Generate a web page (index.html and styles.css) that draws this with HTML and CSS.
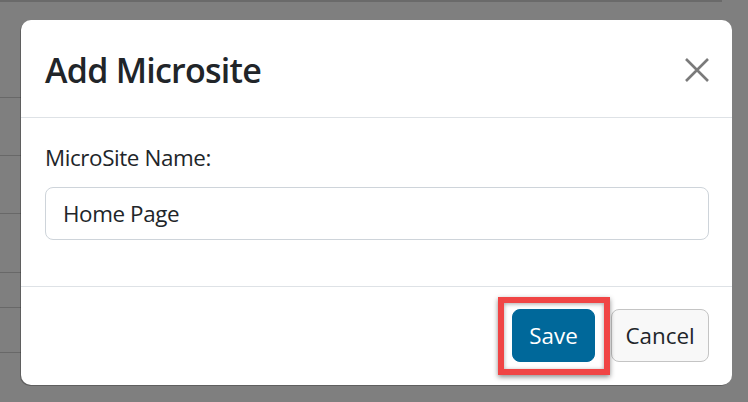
FILE: index.html
```html
<!DOCTYPE html>
<html lang="en">
<head>
<meta charset="utf-8">
<title>Add Microsite</title>
<link rel="stylesheet" href="styles.css">
</head>
<body>
<div class="page">
  <div class="row r1"></div>
  <div class="row r2"></div>
  <div class="row r3"></div>
  <div class="row r4"></div>
  <div class="row r5"></div>
  <div class="row r6"></div>
</div>
<div class="backdrop">
  <div class="modal">
    <div class="modal-header">
      <h4 class="modal-title">Add Microsite</h4>
      <button class="close" aria-label="Close">
        <svg width="24" height="24" viewBox="0 0 24 24"><path d="M1 1 L23 23 M23 1 L1 23" stroke="#7a7a7a" stroke-width="2.6" fill="none"/></svg>
      </button>
    </div>
    <div class="modal-body">
      <label class="label">MicroSite Name:</label>
      <div class="input">Home Page</div>
    </div>
    <div class="modal-footer">
      <button class="btn btn-save">Save</button>
      <button class="btn btn-cancel">Cancel</button>
    </div>
  </div>
</div>
</body>
</html>
```

FILE: styles.css
```css
html, body {
  margin: 0;
  padding: 0;
}
body {
  width: 748px;
  height: 402px;
  overflow: hidden;
  background: #7f7f7f;
  font-family: "Open Sans", "Noto Sans", sans-serif;
  position: relative;
}
.page {
  width: 722px;
  border-top: 2px solid #6a6a6a;
}
.row {
  border-bottom: 1px solid #686868;
}
.r1 { height: 95px; }
.r2 { height: 57px; }
.r3 { height: 57px; }
.r4 { height: 58px; }
.r5 { height: 34px; }
.r6 { height: 44px; }

.backdrop {
  position: absolute;
  inset: 0;
}
.modal {
  position: absolute;
  left: 21px;
  top: 20px;
  width: 711px;
  height: 365px;
  background: #fff;
  border-radius: 10px;
  box-shadow: -1px 1px 0 rgba(0,0,0,0.25);
  display: flex;
  flex-direction: column;
  color: #212529;
}
.modal-header {
  height: 94px;
  padding: 3px 23px 0 24px;
  border-bottom: 1px solid #dee2e6;
  display: flex;
  align-items: center;
  justify-content: space-between;
}
.modal-title {
  margin: 0;
  font-size: 34px;
  font-weight: 600;
  line-height: 1.2;
  letter-spacing: -0.75px;
}
.close {
  border: 0;
  background: none;
  padding: 0;
  width: 24px;
  height: 24px;
  display: flex;
}
.modal-body {
  height: 145px;
  padding: 23px 23px 0 24px;
  border-bottom: 1px solid #dee2e6;
  display: flex;
  flex-direction: column;
}
.label {
  font-size: 22.4px;
  line-height: 33.6px;
  margin-bottom: 12px;
  letter-spacing: -0.4px;
}
.input {
  height: 51px;
  border: 1px solid #ced4da;
  border-radius: 8px;
  padding: 0 17px;
  font-size: 22.4px;
  letter-spacing: -0.4px;
  display: flex;
  align-items: center;
}
.modal-footer {
  flex: 1;
  padding: 22px 23px 0 24px;
  display: flex;
  justify-content: flex-end;
  align-items: flex-start;
  gap: 16px;
}
.btn {
  height: 53px;
  border-radius: 8px;
  font-family: inherit;
  font-size: 22.4px;
  padding: 0;
  display: flex;
  align-items: center;
  justify-content: center;
}
.btn-save {
  position: relative;
  width: 83px;
  background: #00689a;
  border: 1px solid #00689a;
  color: #fff;
}
.btn-save::after {
  content: "";
  position: absolute;
  left: -15px;
  top: -13px;
  right: -16px;
  bottom: -14px;
  border: 6px solid #f04545;
  box-shadow: 0 2px 5px rgba(0,0,0,0.45), inset 0 1px 4px rgba(0,0,0,0.35);
}
.btn-cancel {
  width: 98px;
  background: #f8f8f8;
  border: 1px solid #c4c4c4;
  color: #212529;
}
```
